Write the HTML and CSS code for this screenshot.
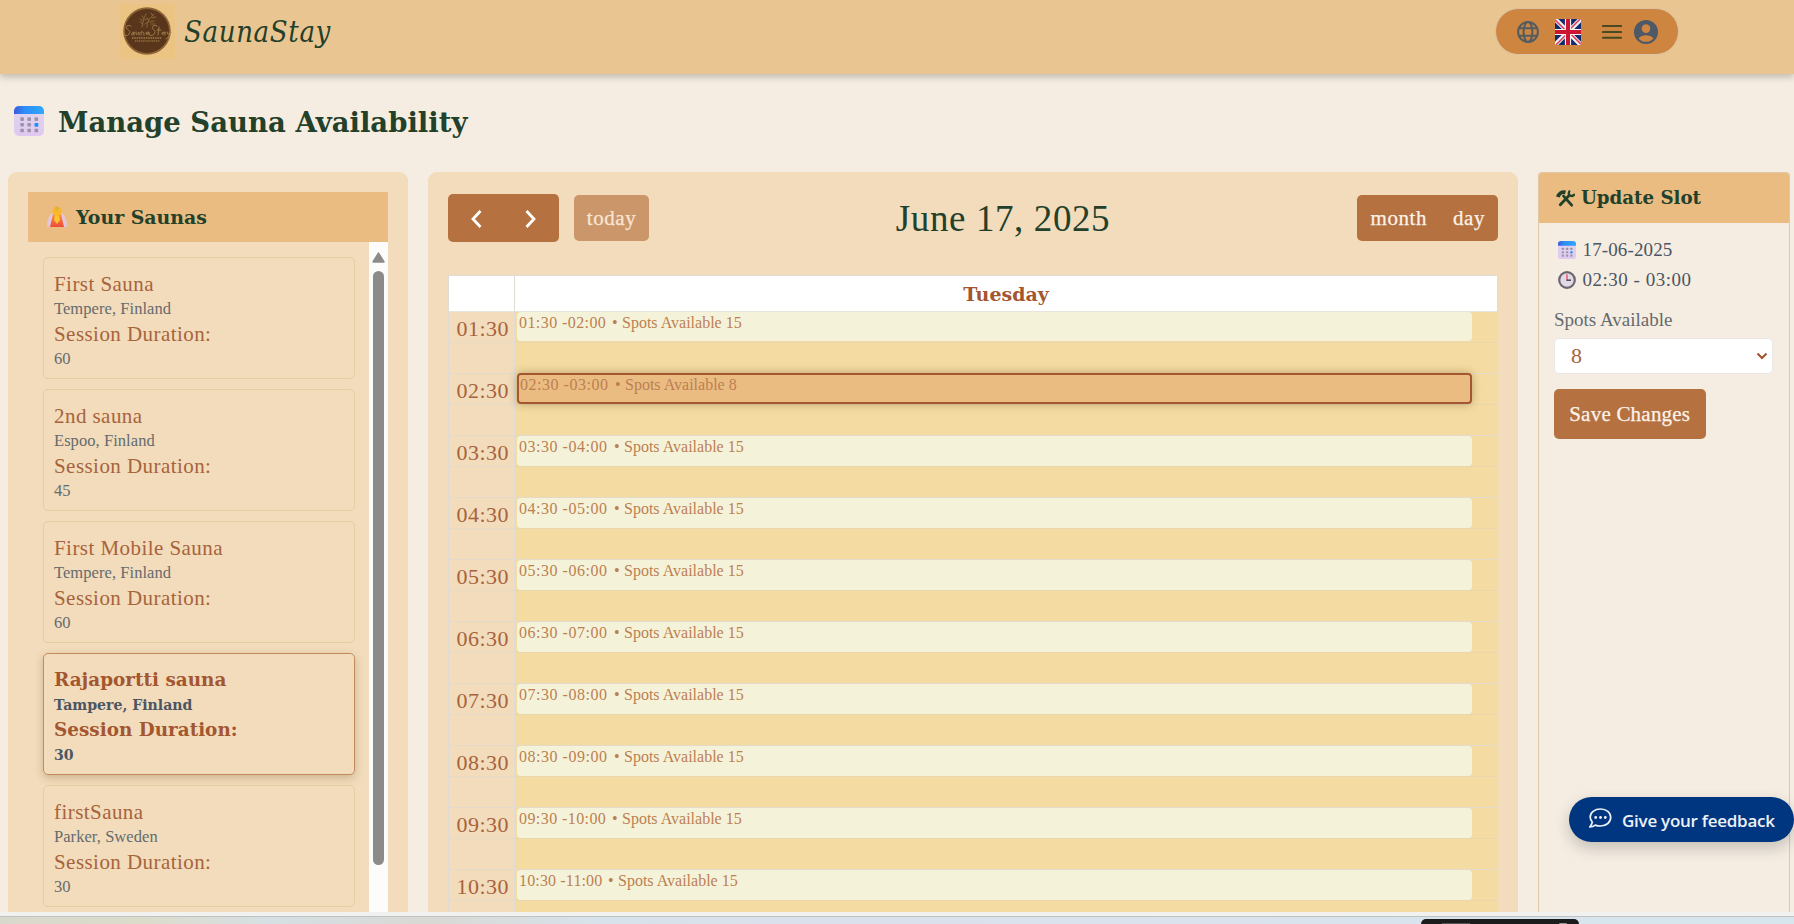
FILE: index.html
```html
<!DOCTYPE html>
<html lang="en">
<head>
<meta charset="utf-8">
<title>SaunaStay</title>
<link rel="stylesheet" href="styles.css">
</head>
<body>
<svg class="defs" aria-hidden="true">
  <defs>
    <linearGradient id="calTop" x1="0" x2="1"><stop offset="0" stop-color="#3a5bdc"/><stop offset=".35" stop-color="#2f8df8"/><stop offset="1" stop-color="#2fa8ff"/></linearGradient>
    <linearGradient id="calBody" x1="0" y1="0" x2="0" y2="1"><stop offset="0" stop-color="#dfd6ee"/><stop offset="1" stop-color="#e0c8f0"/></linearGradient>
    <linearGradient id="robe" x1="0" y1="0" x2="0" y2="1"><stop offset="0" stop-color="#fb9a3c"/><stop offset="1" stop-color="#ee4a3a"/></linearGradient>
    <symbol id="calendar" viewBox="0 0 30 30">
      <rect width="30" height="30" rx="5" fill="url(#calBody)"/>
      <path d="M0 8V5a5 5 0 0 1 5-5h20a5 5 0 0 1 5 5v3z" fill="url(#calTop)"/>
      <g fill="#9b93a8"><rect x="6.3" y="11.3" width="3.6" height="3.6" rx=".8"/><rect x="13.4" y="11.3" width="3.6" height="3.6" rx=".8"/><rect x="20.5" y="11.3" width="3.6" height="3.6" rx=".8"/><rect x="6.3" y="17" width="3.6" height="3.6" rx=".8"/><rect x="13.4" y="17" width="3.6" height="3.6" rx=".8"/><rect x="6.3" y="22.7" width="3.6" height="3.6" rx=".8"/><rect x="13.4" y="22.7" width="3.6" height="3.6" rx=".8"/><rect x="20.5" y="22.7" width="3.6" height="3.6" rx=".8"/></g>
      <rect x="20.5" y="17" width="3.8" height="3.8" rx=".8" fill="#1d8ff5"/>
    </symbol>
  </defs>
</svg>

<div class="page">
  <header class="topbar">
    <div class="brand">
      <svg class="logo" viewBox="0 0 55 55">
        <rect width="55" height="55" fill="#ebc483"/>
        <circle cx="27" cy="27" r="23.8" fill="#8f6434"/>
        <circle cx="27" cy="27" r="22" fill="#59361b"/>
        <g fill="none" stroke="#94713f" stroke-width=".8" stroke-linecap="round">
          <path d="M22 23c1-4 1-8 4-13M27 23c0-5 3-9 7-13M23 17l-3-2M23 20l-3-2M24 15l-2-3M25 20l3-2M25 16l3-2M29 17l-2-3M30 18l4-1M32 14l4-1M33 12l-2-3M31 20l4 0"/>
          <path stroke="#a5824f" stroke-width=".9" d="M11 22c-3-2-6 1-4 3s4 2 2 5-5 1-5 0M13 28c-1 2-2 3-1 3s2-1 2-3v3M16 28v2q1 2 3-2v3M21 31v-3q3-1 3 3M28 28q-3 0-2 2t3-2v3M37 22c-3-2-6 1-4 3s3 2 1 5-5 1-5 0M39 23l-1 8M37 26h4M44 28q-3 0-2 2t3-2v3M47 28q0 3 2 2l2-2q-1 5-5 7"/>
        </g>
        <path d="M12 34h30" stroke="#a07c4c" stroke-width="1.500" stroke-dasharray="1.500 .8"/>
        <path d="M15 37h25" stroke="#927040" stroke-width="1.300" stroke-dasharray="1.200 .7"/>
      </svg>
      <span class="brand-name">SaunaStay</span>
    </div>
    <nav class="menu">
      <svg class="globe" viewBox="0 0 24 24" fill="none" stroke="#535c60" stroke-width="2.200"><circle cx="12" cy="12" r="10.800"/><ellipse cx="12" cy="12" rx="4.800" ry="10.800"/><path d="M2.300 8h19.400M2.300 16h19.400"/></svg>
      <svg class="flag" viewBox="0 0 26 26"><rect width="26" height="26" fill="#102a6e"/><path d="M0 0l26 26M26 0L0 26" stroke="#f4eef2" stroke-width="4.600"/><path d="M0 .8l12 12M26 25.200l-12-12M25.200 0l-12 12M.8 26l12-12" stroke="#d8435a" stroke-width="1.600"/><path d="M13 0v26M0 13h26" stroke="#f8f0f2" stroke-width="6.200"/><path d="M13 0v26M0 13h26" stroke="#cc1433" stroke-width="4"/></svg>
      <svg class="burger" viewBox="0 0 20 16"><path d="M1 2h18M1 8h18M1 13.800h18" stroke="#4a4a22" stroke-width="2.100" stroke-linecap="round"/></svg>
      <svg class="user" viewBox="0 0 24 24"><circle cx="12" cy="12" r="12" fill="#4f5866"/><circle cx="12" cy="8.600" r="4.300" fill="#cd853f"/><path d="M4.600 18.400C6.200 16 9 15.200 12 15.200s5.800.8 7.400 3.200C17.600 20.700 15 21.800 12 21.800s-5.600-1.100-7.400-3.400z" fill="#cd853f"/></svg>
    </nav>
  </header>

  <h1 class="title"><svg class="title-icon"><use href="#calendar"/></svg><span>Manage Sauna Availability</span></h1>

  <main class="columns">
    <section class="saunas">
      <h2 class="bar"><svg class="yoga" viewBox="0 0 20 22">
        <path d="M5 7C1 11 0 16 0 21h20c0-5-1-10-5-14z" fill="#e3c6da"/>
        <path d="M6 8q4-2 8 0l3 13H3z" fill="url(#robe)"/><path d="M8 9h4l1 5-3 4-3-4z" fill="#fcc42f"/><circle cx="10" cy="5.500" r="4.700" fill="#f9b92b"/><circle cx="10" cy="2.600" r="2.200" fill="#e9ae36"/></svg><span>Your Saunas</span></h2>
      <div class="list">
        <div class="cards">
          <article class="card"><p class="name">First Sauna</p><p class="info">Tempere, Finland</p><p class="name">Session Duration:</p><p class="info">60</p></article>
          <article class="card"><p class="name">2nd sauna</p><p class="info">Espoo, Finland</p><p class="name">Session Duration:</p><p class="info">45</p></article>
          <article class="card"><p class="name">First Mobile Sauna</p><p class="info">Tempere, Finland</p><p class="name">Session Duration:</p><p class="info">60</p></article>
          <article class="card selected"><p class="name">Rajaportti sauna</p><p class="info">Tampere, Finland</p><p class="name">Session Duration:</p><p class="info">30</p></article>
          <article class="card"><p class="name">firstSauna</p><p class="info">Parker, Sweden</p><p class="name">Session Duration:</p><p class="info">30</p></article>
        </div>
        <div class="scrollbar"><svg class="up" viewBox="0 0 12 10"><path d="M6 1l5 8H1z" fill="#8b8b8b" stroke="#8b8b8b" stroke-width="1.500" stroke-linejoin="round"/></svg><div class="thumb"></div></div>
      </div>
    </section>

    <section class="calendar">
      <div class="toolbar">
        <div class="left">
          <div class="arrows">
            <svg viewBox="0 0 12 20"><path d="M10 2L2.500 10l7.500 8" /></svg>
            <svg viewBox="0 0 12 20"><path d="M2 2l7.500 8L2 18" /></svg>
          </div>
          <button class="btn today">today</button>
        </div>
        <div class="date">June 17, 2025</div>
        <div class="views"><button class="btn">month</button><button class="btn day">day</button></div>
      </div>
      <div class="grid">
        <div class="row head"><div class="axis"></div><div class="weekday">Tuesday</div></div>
        <div class="row"><div class="axis">01:30</div><div class="lane"><div class="event first"><span>01:30 -02:00</span><i>•</i><b>Spots Available 15</b></div></div></div>
        <div class="row"><div class="axis">02:30</div><div class="lane"><div class="event active"><span>02:30 -03:00</span><i>•</i><b>Spots Available 8</b></div></div></div>
        <div class="row"><div class="axis">03:30</div><div class="lane"><div class="event"><span>03:30 -04:00</span><i>•</i><b>Spots Available 15</b></div></div></div>
        <div class="row"><div class="axis">04:30</div><div class="lane"><div class="event"><span>04:30 -05:00</span><i>•</i><b>Spots Available 15</b></div></div></div>
        <div class="row"><div class="axis">05:30</div><div class="lane"><div class="event"><span>05:30 -06:00</span><i>•</i><b>Spots Available 15</b></div></div></div>
        <div class="row"><div class="axis">06:30</div><div class="lane"><div class="event"><span>06:30 -07:00</span><i>•</i><b>Spots Available 15</b></div></div></div>
        <div class="row"><div class="axis">07:30</div><div class="lane"><div class="event"><span>07:30 -08:00</span><i>•</i><b>Spots Available 15</b></div></div></div>
        <div class="row"><div class="axis">08:30</div><div class="lane"><div class="event"><span>08:30 -09:00</span><i>•</i><b>Spots Available 15</b></div></div></div>
        <div class="row"><div class="axis">09:30</div><div class="lane"><div class="event"><span class="narrow">09:30 -10:00</span><i>•</i><b>Spots Available 15</b></div></div></div>
        <div class="row"><div class="axis">10:30</div><div class="lane"><div class="event"><span class="narrower">10:30 -11:00</span><i>•</i><b>Spots Available 15</b></div></div></div>
      </div>
    </section>

    <section class="slot">
      <h2 class="slot-head"><svg class="tools" viewBox="0 0 20 20"><g fill="none" stroke="#23402b" stroke-linecap="round"><path d="M4.500 16.500L14 6.500" stroke-width="3"/><path d="M8 7.500l8.500 9.500" stroke-width="3"/><path d="M2 8.500C3 5 6 2.500 10 3.500" stroke-width="4" stroke-linecap="butt"/><path d="M14 2.500q-1.500 3.500 1 4.500t4-1" stroke-width="2.400"/></g></svg><span>Update Slot</span></h2>
      <div class="slot-body">
        <p class="line"><svg><use href="#calendar"/></svg><span class="d">17-06-2025</span></p>
        <p class="line"><svg viewBox="0 0 18 18"><circle cx="9" cy="9" r="7.800" fill="#dfdae4" stroke="#6d6672" stroke-width="2.200"/><path d="M9 3.200v6" stroke="#ee5d76" stroke-width="1.500"/><path d="M8.400 9.200h4.600" stroke="#4c4553" stroke-width="1.500"/></svg><span class="t">02:30 - 03:00</span></p>
        <label class="label">Spots Available</label>
        <div class="select"><span>8</span><svg viewBox="0 0 12 8"><path d="M1.500 1.500L6 6l4.500-4.500" fill="none" stroke="#a0522d" stroke-width="2"/></svg></div>
        <button class="save">Save Changes</button>
      </div>
    </section>
  </main>
  <button class="feedback"><svg viewBox="0 0 24 22" fill="none" stroke="#eef1f8" stroke-width="1.700" stroke-linejoin="round"><path d="M12.500 2C6.500 2 2.200 5.500 2.200 10c0 2 .8 3.700 2.100 5C4 17 3 18.500 1.800 20c2.200 0 4-.7 5.500-1.900 1.600.6 3.300.9 5.200.9 5.900 0 10.200-3.800 10.200-8.700S18.400 2 12.500 2z"/><g fill="#eef1f8" stroke="none"><circle cx="7.700" cy="10.500" r="1.400"/><circle cx="12.500" cy="10.500" r="1.400"/><circle cx="17.300" cy="10.500" r="1.400"/></g></svg><span>Give your feedback</span></button>
</div>
<div class="desktop"><div class="taskbar"><i></i><b></b></div></div>
</body>
</html>
```
FILE: styles.css
```css
* { box-sizing: border-box; }
body {
  margin: 0;
  height: 924px;
  overflow: hidden;
  background: #f5ede2;
  font-family: "Liberation Serif", Georgia, serif;
  white-space: nowrap;
}
h1, h2, p { margin: 0; }
svg { display: block; flex: none; }
button { border: 0; padding: 0; background: none; font-family: inherit; white-space: nowrap; }
.title, .bar, .slot-head, .weekday, .selected { font-family: "DejaVu Serif", Georgia, serif; }
.defs { position: absolute; width: 0; height: 0; }
.page { position: relative; height: 912px; overflow: hidden; display: flex; flex-direction: column; }

/* header */
.topbar {
  flex: none;
  height: 74px;
  padding: 4px 115px 0 120px;
  display: flex;
  justify-content: space-between;
  align-items: flex-start;
  background: #e9c591;
  box-shadow: 0 3px 7px rgba(0, 0, 0, .22);
}
.brand { display: flex; }
.logo { width: 55px; height: 55px; }
.brand-name { margin-left: 9px; font-family: "DejaVu Serif Condensed", Georgia, serif; font-size: 29px; line-height: 56px; font-style: italic; letter-spacing: .64px; color: #23402b; }
.menu {
  width: 184px;
  height: 47px;
  margin-top: 4px;
  padding-left: 21px;
  display: flex;
  align-items: center;
  background: #cd853f;
  border: 1px solid #dcc3a4;
  border-radius: 24px;
}
.globe { width: 22px; height: 22px; }
.flag { width: 26px; height: 26px; margin-left: 16px; }
.burger { width: 20px; height: 16px; margin-left: 21px; }
.user { width: 24px; height: 24px; margin-left: 12px; }

/* page heading */
.title {
  flex: none;
  height: 98px;
  padding: 32px 0 0 14px;
  display: flex;
  font-size: 27.5px;
  line-height: 33px;
  color: #23402b;
}
.title-icon { width: 30px; height: 30px; }
.title span { margin-left: 14px; }

.columns {
  flex: 1;
  min-height: 0;
  padding-left: 8px;
  display: grid;
  grid-template-columns: 400px 1090px 252px;
  gap: 20px;
}
.saunas, .calendar { background: #f2dcbb; border-radius: 9px 9px 0 0; }

/* sauna list */
.saunas { padding: 20px 20px 0; display: flex; flex-direction: column; min-height: 0; }
.bar {
  flex: none;
  height: 50px;
  padding-left: 19px;
  display: flex;
  align-items: center;
  background: #eabc82;
  color: #23402b;
  font-size: 18.9px;
  line-height: 51px;
}
.yoga { width: 20px; height: 22px; }
.bar span { margin-left: 9px; }
.list { flex: 1; min-height: 0; display: flex; justify-content: space-between; overflow: hidden; }
.cards { width: 312px; margin-left: 15px; padding-top: 15px; display: flex; flex-direction: column; gap: 10px; }
.card { flex: none; height: 122px; padding: 12px 0 0 10px; border: 1px solid #e8cca2; border-radius: 5px; }
.name { font-size: 21px; line-height: 28px; letter-spacing: .44px; color: #a8633c; }
.info { font-size: 16.5px; line-height: 22px; letter-spacing: .06px; color: #656b6e; }
.selected { font-weight: 700; border-color: #c38a5c; box-shadow: 0 3px 8px rgba(100, 60, 20, .25); }
.selected .name { font-size: 18.4px; letter-spacing: 0; color: #a3562f; }
.selected .info { font-size: 14.1px; letter-spacing: 0; color: #4b5563; }
.scrollbar { width: 19px; padding-top: 10px; display: flex; flex-direction: column; align-items: center; background: #fcfcfc; }
.up { width: 13px; height: 11px; }
.thumb { width: 11px; height: 594px; margin-top: 8px; border-radius: 6px; background: #8b8b8b; }

/* calendar */
.calendar { padding: 22px 20px 0; min-height: 0; overflow: hidden; }
.toolbar { height: 48px; display: flex; justify-content: space-between; align-items: flex-start; }
.left { width: 201px; display: flex; gap: 15px; }
.arrows {
  width: 111px;
  height: 48px;
  padding: 1px 22px 0 21.5px;
  display: flex;
  justify-content: space-between;
  align-items: center;
  background: #b5713f;
  border-radius: 5px;
}
.arrows svg { width: 13px; height: 20px; }
.arrows path { fill: none; stroke: #fff; stroke-width: 2.8; }
.btn { height: 46px; font-size: 21px; line-height: 46px; letter-spacing: .56px; color: #fbf3ea; -webkit-text-stroke: .25px; }
.today { width: 75px; margin-top: 1px; border-radius: 5px; background: #ca966a; color: #f8e6d3; }
.date { font-size: 37px; line-height: 50px; letter-spacing: .6px; color: #23402b; }
.views { width: 141px; margin-top: 1px; padding-left: 13.5px; display: flex; gap: 26px; background: #b5713f; border-radius: 5px; }
.grid { margin-top: 33px; border: 1px solid #dfdcd6; }
.row { display: grid; grid-template-columns: 66px 1fr; height: 62px; border-bottom: 1px solid #e3dacb; }
.axis {
  padding-right: 5px;
  text-align: right;
  border-right: 1px solid #dfdcd6;
  font-size: 22px;
  line-height: 33px;
  letter-spacing: .5px;
  color: #a8633c;
  background: linear-gradient(#e6dac8, #e6dac8) 0 30px / 100% 1px no-repeat;
}
.row.head { height: 36px; background: #fff; border-color: #e6e4dc; }
.head .axis { background: none; }
.weekday { text-align: center; font-size: 19px; font-weight: 700; line-height: 36px; color: #a3562f; }
.lane { padding: 0 25px 0 2px; background: linear-gradient(#ead7ad, #ead7ad) 0 30px / 100% 1px no-repeat #f4dba1; }
.event {
  height: 30px;
  padding: 0 0 0 2px;
  display: flex;
  border-radius: 4px;
  background: #f4f3d9;
  color: #bd7f52;
  font-size: 16px;
  line-height: 21px;
}
.event.first { height: 29px; }
.event span { width: 95px; letter-spacing: .52px; }
.event.first span, .event .narrow { width: 93px; letter-spacing: .42px; }
.event .narrower { width: 89px; letter-spacing: .15px; }
.event i, .event b { font-style: normal; font-weight: 400; }
.event i { width: 10px; }
.event.active { height: 31px; margin-top: -1px; padding-left: 1px; line-height: 20px; background: #eabc82; border: 2px solid #a3562f; box-shadow: 0 0 8px rgba(80, 50, 10, .35); }

/* slot editor */
.slot { border: 1px solid #e2c9a5; border-bottom: 0; border-radius: 4px 4px 0 0; min-height: 0; overflow: hidden; }
.slot-head { height: 50px; padding-left: 17px; display: flex; align-items: center; background: #eabc82; color: #23402b; font-size: 18.2px; line-height: 50px; }
.tools { width: 19px; height: 19px; }
.slot-head span { margin-left: 6px; }
.slot-body { padding: 12px 16px 0 15px; display: flex; flex-direction: column; align-items: flex-start; }
.line { height: 30px; padding-left: 3.5px; display: flex; align-items: center; font-size: 19px; color: #4b5563; }
.line svg { width: 18px; height: 18px; }
.line span { margin-left: 7px; }
.d { letter-spacing: .13px; }
.t { letter-spacing: .51px; }
.label { margin-top: 11px; font-size: 19px; line-height: 28px; color: #656b6e; }
.select { width: 219px; height: 36px; margin-top: 4px; padding: 0 4px 0 16px; display: flex; justify-content: space-between; align-items: center; background: #fff; border: 1px solid #ece8e6; border-radius: 5px; color: #a8633c; font-size: 22px; }
.select svg { width: 12px; height: 8px; }
.save { width: 151.5px; height: 50px; margin-top: 15px; border-radius: 5px; background: #b5713f; color: #fbf3ea; font-size: 21px; line-height: 51px; letter-spacing: .22px; -webkit-text-stroke: .25px; }

.feedback {
  position: absolute;
  right: 0;
  top: 797px;
  width: 225px;
  height: 45px;
  padding-left: 19px;
  display: flex;
  align-items: center;
  border-radius: 23px;
  background: #003580;
  color: #eef1f8;
  box-shadow: 0 6px 16px rgba(0, 0, 0, .2);
  font: 600 17px/45px "Open Sans", sans-serif;
  letter-spacing: -.26px;
}
.feedback svg { width: 24px; height: 22px; margin-top: -3px; }
.feedback span { margin-left: 10px; padding-top: 1px; }

/* window edge and desktop below */
.desktop {
  height: 12px;
  padding-left: 1421px;
  border-top: 4px solid #f1f1ef;
  background: linear-gradient(#bfc2c2 0 1px, transparent 1px), linear-gradient(90deg, #d9d8cc, #dcdccb 8%, #d6dfe3 15%, #d9d9d4 24%, #d7e2ea 33%, #dbe1ec 45%, #d9e3ee 75%, #d6e6ec);
}
.taskbar { width: 158px; height: 8px; padding: 4px 12px 0 21px; margin-top: 3px; display: flex; justify-content: space-between; border-radius: 5px 5px 0 0; background: #1c1c1c; }
.taskbar i { width: 28px; height: 1px; background: #555; }
.taskbar b { width: 8px; height: 2px; border-radius: 3px; background: #999; }
```
